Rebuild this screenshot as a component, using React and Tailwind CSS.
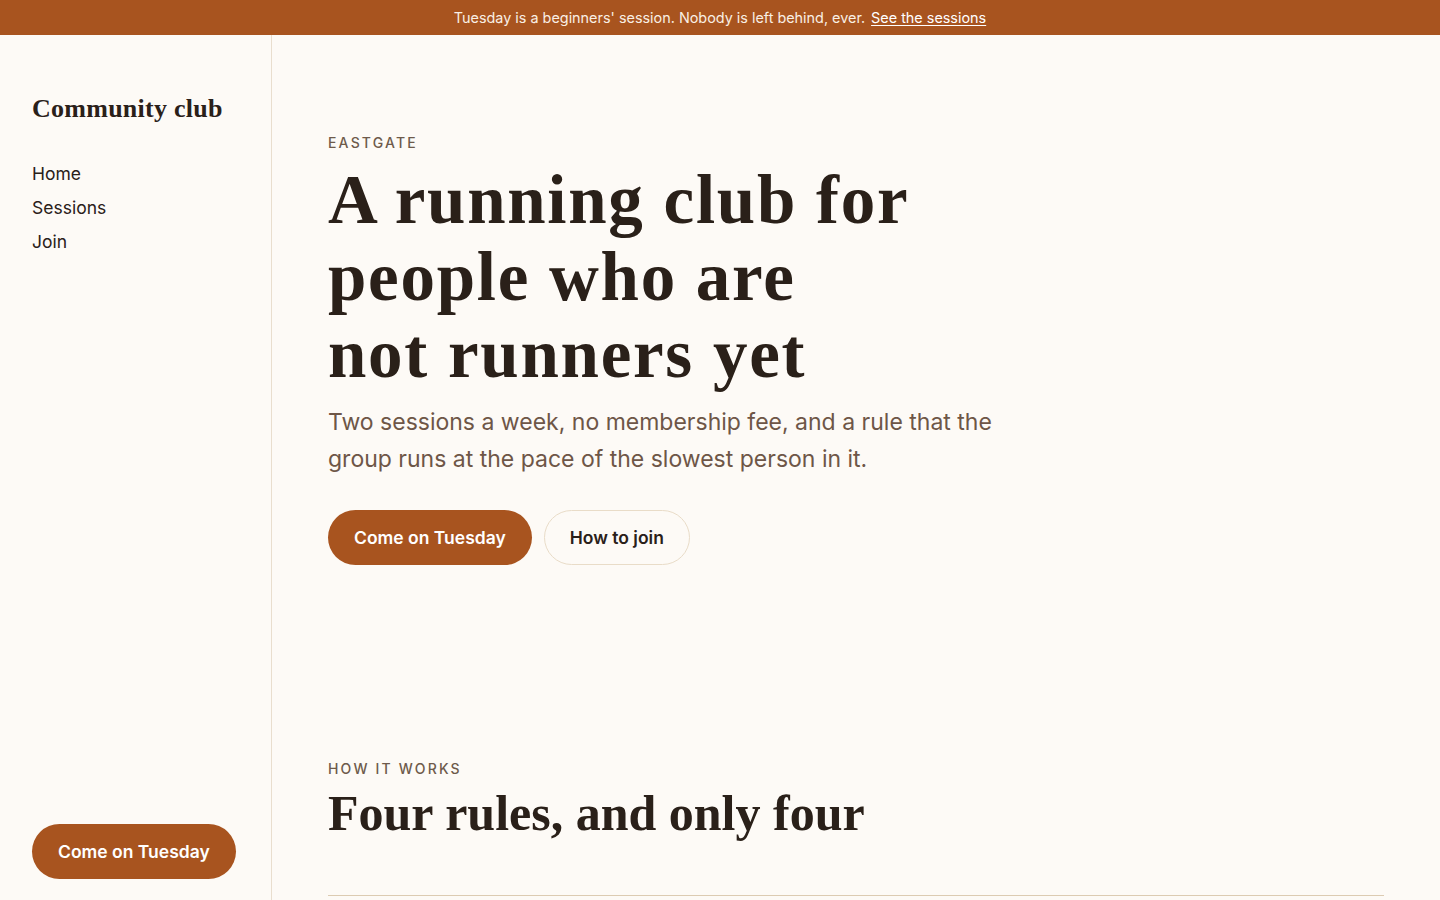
import React from 'react';

const serif = "font-['Liberation_Serif',serif]";

const rules = [
  { n: '01', title: 'Nobody runs alone', body: 'The back marker stays with whoever is last. Every session, every week.' },
  { n: '02', title: 'Walking counts', body: 'Run for a minute, walk for two. That is a session, and you did it.' },
  { n: '03', title: 'No kit required', body: 'Trainers you already own are fine. So is a cotton T-shirt.' },
  { n: '04', title: 'Coffee after', body: 'We finish at the café on the corner. Staying is optional, but most do.' },
];

const Sidebar = () => (
  <aside className="sticky top-0 flex h-screen w-[272px] shrink-0 flex-col border-r border-[#e9dece] px-8 py-14">
    <div className={`${serif} text-[26px] font-bold leading-9 tracking-[0.01em] text-[#2a2019]`}>Community club</div>
    <nav className="mt-[34px] flex flex-col gap-2">
      {['Home', 'Sessions', 'Join'].map((item) => (
        <a key={item} href="#" className="text-[17.5px] leading-[26px] text-[#2a2019]">
          {item}
        </a>
      ))}
    </nav>
    <div className="mt-auto">
      <a
        href="#"
        className="inline-flex h-[55px] items-center rounded-full bg-[#a8541f] px-[26px] pt-[2px] text-[17.5px] font-semibold text-white"
      >
        Come on Tuesday
      </a>
    </div>
  </aside>
);

export default function App() {
  return (
    <div className="min-h-screen bg-[#fdfaf6] font-['Inter',sans-serif] text-[#2a2019]">
      <div className="flex h-[35px] items-center justify-center gap-1.5 bg-[#a8541f] text-[14.4px] text-[#f9efe4]">
        <span>Tuesday is a beginners' session. Nobody is left behind, ever.</span>
        <a href="#" className="text-white underline underline-offset-2">See the sessions</a>
      </div>

      <div className="flex items-start">
        <Sidebar />

        <main className="min-w-0 flex-1 px-14">
          <section className="pb-24 pt-[98px]">
            <p className="text-[14px] font-medium uppercase leading-5 tracking-[0.155em] text-[#6e5a4b]">Eastgate</p>
            <h1 className={`${serif} mt-[9px] text-[69px] font-bold leading-[77px] tracking-[0.025em] text-[#2a2019]`}>
              A running club for
              <br />
              people who are
              <br />
              not runners yet
            </h1>
            <p className="mt-[11px] max-w-[720px] text-[23px] leading-[37px] text-[#6e5647]">
              Two sessions a week, no membership fee, and a rule that the group runs at the pace of the slowest person in it.
            </p>
            <div className="mt-[32px] flex gap-3">
              <a
                href="#"
                className="inline-flex h-[55px] items-center rounded-full bg-[#a8541f] px-[26px] pt-[2px] text-[17.5px] font-semibold text-white"
              >
                Come on Tuesday
              </a>
              <a
                href="#"
                className="inline-flex h-[55px] items-center rounded-full border border-[#e9dcc8] px-[25px] pt-[2px] text-[17.5px] font-semibold text-[#2a2019]"
              >
                How to join
              </a>
            </div>
          </section>

          <section className="pb-24 pt-[98px]">
            <p className="text-[14px] font-medium uppercase leading-5 tracking-[0.155em] text-[#6e5a4b]">How it works</p>
            <h2 className={`${serif} mt-1 text-[50px] font-bold leading-[60px] text-[#2a2019]`}>
              Four rules, and only four
            </h2>
            <ol className="mt-[52px] border-t border-[#dccbb2]">
              {rules.map((r) => (
                <li key={r.n} className="grid grid-cols-[80px_1fr] gap-6 border-b border-[#e9dece] py-8">
                  <span className={`${serif} text-[28px] font-bold text-[#a8541f]`}>{r.n}</span>
                  <div>
                    <h3 className={`${serif} text-[26px] font-bold`}>{r.title}</h3>
                    <p className="mt-2 text-[18px] leading-7 text-[#6e5a4b]">{r.body}</p>
                  </div>
                </li>
              ))}
            </ol>
          </section>
        </main>
      </div>
    </div>
  );
}
